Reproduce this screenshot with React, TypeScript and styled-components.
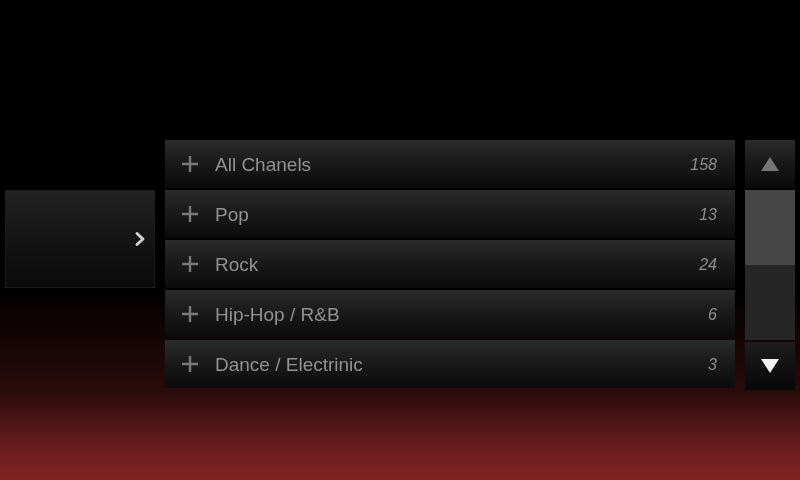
import React from 'react';
import styled, { createGlobalStyle } from 'styled-components';

const GlobalStyle = createGlobalStyle`
  html, body {
    margin: 0;
    padding: 0;
    background: #000;
  }
  body {
    font-family: "Liberation Sans", Arial, sans-serif;
  }
`;

const Screen = styled.div`
  width: 800px;
  height: 480px;
  box-sizing: border-box;
  padding: 140px 5px 0 5px;
  background: linear-gradient(
    to bottom,
    #000 0px,
    #000 290px,
    #2a0b0b 392px,
    #5a1819 432px,
    #842222 480px
  );
  display: flex;
  align-items: flex-start;
  gap: 10px;
  overflow: hidden;
  filter: blur(0.6px);
`;

const SidePanel = styled.div`
  margin-top: 50px;
  width: 150px;
  height: 98px;
  box-sizing: border-box;
  border: 1px solid #1c1c1c;
  background: linear-gradient(to bottom, #222 0%, #141414 50%, #0a0a0a 100%);
  display: flex;
  align-items: center;
  justify-content: flex-end;
  padding-right: 8px;
`;

const List = styled.div`
  width: 570px;
  display: flex;
  flex-direction: column;
  gap: 2px;
`;

const Row = styled.div`
  height: 48px;
  box-sizing: border-box;
  padding: 2px 18px 0 16px;
  display: flex;
  align-items: center;
  background: linear-gradient(to bottom, #2b2b2b 0%, #1a1a1a 45%, #0b0b0b 100%);
`;

const PlusIcon = styled.svg`
  width: 18px;
  height: 18px;
  flex: none;
  margin-top: -2px;
`;

const Label = styled.span`
  margin-left: 16px;
  font-size: 19px;
  flex: 1;
  color: #929292;
`;

const Count = styled.span`
  font-size: 16px;
  font-style: italic;
  color: #8e8e8e;
`;

const Scrollbar = styled.div`
  width: 50px;
  height: 250px;
  display: flex;
  flex-direction: column;
`;

const ScrollButton = styled.div<{ $down?: boolean }>`
  height: 48px;
  flex: none;
  display: flex;
  align-items: center;
  justify-content: center;
  background: ${({ $down }) =>
    $down
      ? 'linear-gradient(to bottom, #1e1e1e 0%, #111 50%, #080808 100%)'
      : 'linear-gradient(to bottom, #2a2a2a 0%, #181818 50%, #0a0a0a 100%)'};
`;

const Track = styled.div`
  flex: 1;
  margin: 2px 0;
  background: #262626;
  display: flex;
  flex-direction: column;
`;

const Thumb = styled.div`
  height: 75px;
  background: #474747;
`;

const channels = [
  { name: 'All Chanels', count: 158 },
  { name: 'Pop', count: 13 },
  { name: 'Rock', count: 24 },
  { name: 'Hip-Hop / R&B', count: 6 },
  { name: 'Dance / Electrinic', count: 3 },
];

const Plus = () => (
  <PlusIcon viewBox="0 0 18 18">
    <path d="M9 1v16M1 9h16" stroke="#7a7a7a" strokeWidth="2.4" />
  </PlusIcon>
);

const App: React.FC = () => {
  return (
    <>
      <GlobalStyle />
      <Screen>
        <SidePanel>
          <svg width="12" height="16" viewBox="0 0 12 16">
            <path d="M3 2.5l6 5.5-6 5.5" fill="none" stroke="#d0d0d0" strokeWidth="3" strokeLinejoin="round" strokeLinecap="round" />
          </svg>
        </SidePanel>

        <List>
          {channels.map((c) => (
            <Row key={c.name}>
              <Plus />
              <Label>{c.name}</Label>
              <Count>{c.count}</Count>
            </Row>
          ))}
        </List>

        <Scrollbar>
          <ScrollButton>
            <svg width="20" height="16" viewBox="0 0 20 16">
              <path d="M10 1L19 15H1z" fill="#767676" />
            </svg>
          </ScrollButton>
          <Track>
            <Thumb />
          </Track>
          <ScrollButton $down>
            <svg width="20" height="16" viewBox="0 0 20 16">
              <path d="M1 1h18L10 15z" fill="#f2f2f2" />
            </svg>
          </ScrollButton>
        </Scrollbar>
      </Screen>
    </>
  );
};

export default App;
